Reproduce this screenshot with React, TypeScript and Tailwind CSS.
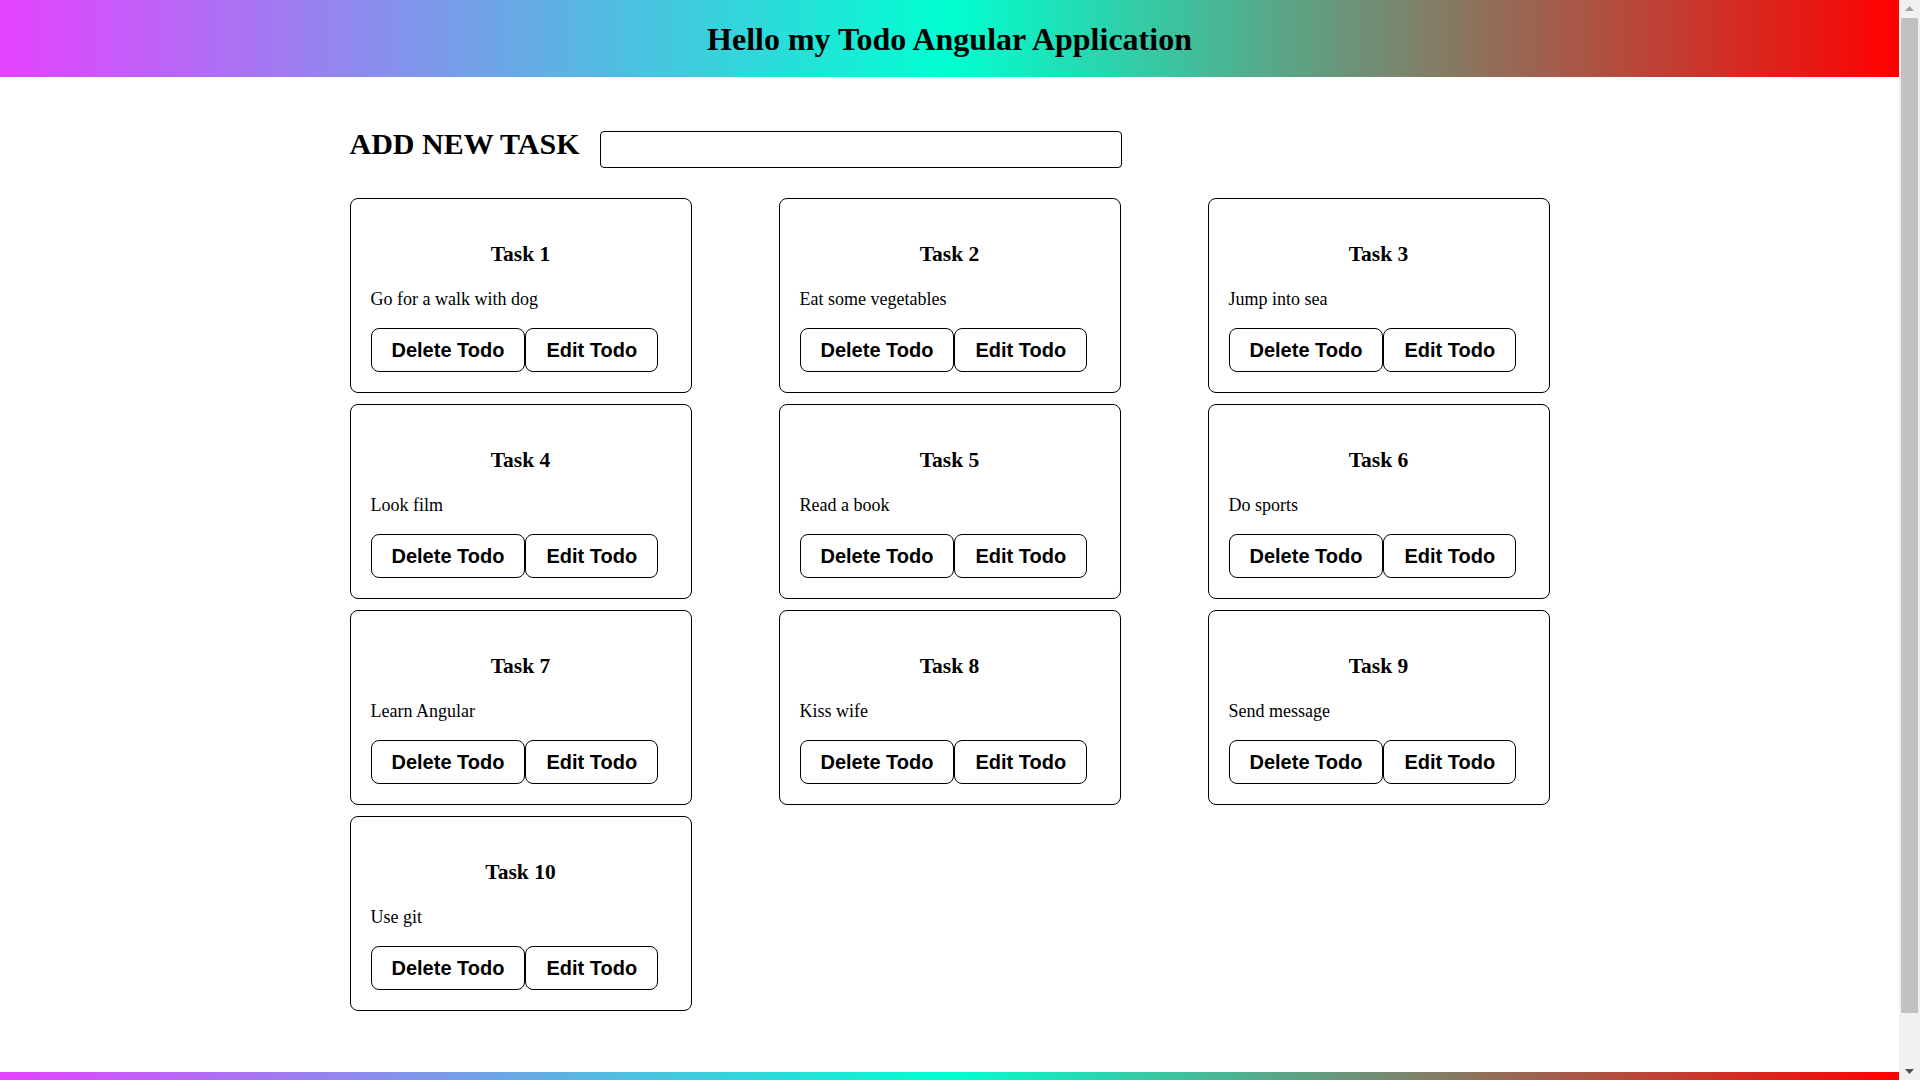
import React from "react";

const tasks: [string, string][] = [
  ["Task 1", "Go for a walk with dog"],
  ["Task 2", "Eat some vegetables"],
  ["Task 3", "Jump into sea"],
  ["Task 4", "Look film"],
  ["Task 5", "Read a book"],
  ["Task 6", "Do sports"],
  ["Task 7", "Learn Angular"],
  ["Task 8", "Kiss wife"],
  ["Task 9", "Send message"],
  ["Task 10", "Use git"],
];

function Card({ title, desc }: { title: string; desc: string }) {
  return (
    <div className="rounded-[8px] border border-black bg-white px-[20px] py-[20px]">
      <h3 className="mt-[23px] text-center font-['Liberation_Serif',serif] text-[21.5px] font-bold leading-[24px] text-black">
        {title}
      </h3>
      <p className="mt-[23px] font-['Liberation_Serif',serif] text-[18px] leading-[20px] text-black">
        {desc}
      </p>
      <div className="mt-[19px] flex">
        <button className="h-[44px] rounded-[8px] border border-black bg-white px-[20px] font-['Liberation_Sans',Arial,sans-serif] text-[20px] font-bold leading-none text-black">
          Delete Todo
        </button>
        <button className="h-[44px] rounded-[8px] border border-black bg-white px-[20px] font-['Liberation_Sans',Arial,sans-serif] text-[20px] font-bold leading-none text-black">
          Edit Todo
        </button>
      </div>
    </div>
  );
}

function Scrollbar() {
  return (
    <div className="flex w-[21px] shrink-0 flex-col bg-[#f1f1f1]">
      <div className="flex h-[17px] items-center justify-center">
        <svg width="9" height="5" viewBox="0 0 9 5">
          <path d="M0 5 L4.5 0 L9 5 Z" fill="#a3a3a3" />
        </svg>
      </div>
      <div className="mx-[2px] mt-[1px] h-[995px] bg-[#c1c1c1]" />
      <div className="flex-1" />
      <div className="flex h-[17px] items-center justify-center">
        <svg width="9" height="5" viewBox="0 0 9 5">
          <path d="M0 0 L4.5 5 L9 0 Z" fill="#505050" />
        </svg>
      </div>
    </div>
  );
}

export default function App() {
  return (
    <div className="flex h-[1080px] w-[1920px] overflow-hidden bg-white">
      <div className="flex min-w-0 flex-1 flex-col">
        <header className="flex h-[77px] shrink-0 items-center justify-center bg-[linear-gradient(to_right,#e443ff,#00ffd0,#ff0000)]">
          <h1 className="font-['Liberation_Serif',serif] text-[32px] font-bold leading-none text-black">
            Hello my Todo Angular Application
          </h1>
        </header>
        <main className="min-h-0 flex-1 overflow-hidden">
          <div className="mx-auto w-[1200px] pt-[52px]">
            <div className="flex items-start">
              <h2 className="font-['Liberation_Serif',serif] text-[30px] font-bold leading-[30px] text-black">
                ADD NEW TASK
              </h2>
              <input
                type="text"
                className="ml-[20px] mt-[2px] h-[37px] w-[522px] rounded-[4px] border border-black bg-white px-2 outline-none"
              />
            </div>
            <div className="mt-[30px] grid grid-cols-[repeat(3,342px)] gap-x-[87px] gap-y-[11px]">
              {tasks.map(([t, d]) => (
                <Card key={t} title={t} desc={d} />
              ))}
            </div>
          </div>
        </main>
        <footer className="h-[8px] shrink-0 bg-[linear-gradient(to_right,#e443ff,#00ffd0,#ff0000)]" />
      </div>
      <Scrollbar />
    </div>
  );
}
